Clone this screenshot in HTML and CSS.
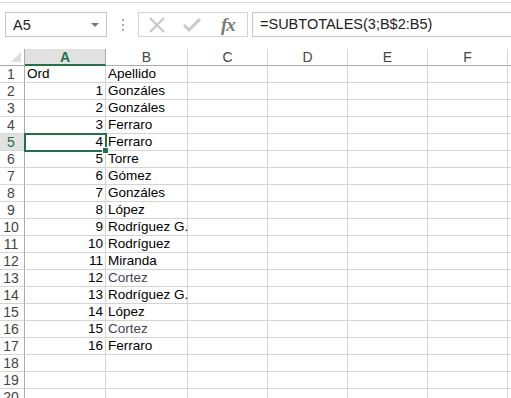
FILE: index.html
```
<!DOCTYPE html>
<html lang="es">
<head>
    <meta charset="UTF-8">
    <title>Libro1</title>
    <link rel="stylesheet" href="styles.css">
</head>
<body>
    <div class="topline"></div>
    <div class="formula-bar">
        <div class="namebox">
            <span>A5</span>
            <span class="drop"></span>
        </div>
        <div class="grip"><i></i><i></i><i></i></div>
        <div class="tools">
            <svg width="18" height="18" viewBox="0 0 18 18"><path d="M2 2 L16 16 M16 2 L2 16" stroke="#c8c8c8" stroke-width="2.2" fill="none"/></svg>
            <svg width="20" height="18" viewBox="0 0 20 18"><path d="M2 9 L7 14 L18 3" stroke="#c8c8c8" stroke-width="3" fill="none"/></svg>
            <span class="fx">fx</span>
        </div>
        <div class="formula">=SUBTOTALES(3;B$2:B5)</div>
    </div>

    <div class="sheet" id="sheet">
        <div class="corner"><span class="tri"></span></div>
        <div class="colhead active">A</div>
        <div class="colhead">B</div>
        <div class="colhead">C</div>
        <div class="colhead">D</div>
        <div class="colhead">E</div>
        <div class="colhead">F</div>
        <div class="colhead"></div>
    </div>

    <script>
        var data = [
            ['Ord', 'Apellido'],
            [1, 'Gonzáles'], [2, 'Gonzáles'], [3, 'Ferraro'], [4, 'Ferraro'],
            [5, 'Torre'], [6, 'Gómez'], [7, 'Gonzáles'], [8, 'López'],
            [9, 'Rodríguez G.'], [10, 'Rodríguez'], [11, 'Miranda'], [12, 'Cortez'],
            [13, 'Rodríguez G.'], [14, 'López'], [15, 'Cortez'], [16, 'Ferraro']
        ];
        var sheet = document.getElementById('sheet');
        var html = '';
        for (var r = 0; r < 20; r++) {
            var row = data[r] || ['', ''];
            var sel = r == 4;
            html += '<div class="rowhead' + (sel ? ' active' : '') + '">' + (r + 1) + '</div>';
            var a = row[0];
            html += '<div class="cell' + (typeof a == 'number' ? ' num' : '') + (sel ? ' selected' : '') + '">' + a +
                (sel ? '<span class="handle"></span>' : '') + '</div>';
            var b = row[1];
            html += '<div class="cell' + (b == 'Cortez' ? ' soft' : '') + '">' + b + '</div>';
            for (var c = 0; c < 5; c++) html += '<div class="cell"></div>';
        }
        sheet.insertAdjacentHTML('beforeend', html);
    </script>
</body>
</html>
```
FILE: styles.css
```
*{
    margin: 0;
    padding: 0;
    box-sizing: border-box;
}
body{
    width: 511px;
    height: 398px;
    overflow: hidden;
    background: #fff;
    font-family: "Liberation Sans", Arial, sans-serif;
    color: #000;
}
.topline{
    height: 3px;
    border-bottom: 1px solid #d6d6d6;
    margin-top: 0;
}
.formula-bar{
    display: flex;
    align-items: center;
    height: 25px;
    margin-top: 9px;
    padding-left: 5px;
}
.namebox{
    width: 102px;
    height: 25px;
    border: 1px solid #c6c6c6;
    display: flex;
    align-items: center;
    justify-content: space-between;
    padding: 0 7px 0 7px;
    font-size: 14.5px;
    color: #222;
}
.namebox .drop{
    width: 0;
    height: 0;
    border-left: 4px solid transparent;
    border-right: 4px solid transparent;
    border-top: 4px solid #777;
}
.grip{
    width: 31px;
    display: flex;
    flex-direction: column;
    align-items: center;
    gap: 3px;
}
.grip i{
    display: block;
    width: 2px;
    height: 2px;
    background: #a8a8a8;
}
.tools{
    width: 110px;
    height: 25px;
    border: 1px solid #d4d4d4;
    display: flex;
    align-items: center;
    padding-left: 9px;
    gap: 16px;
}
.tools .fx{
    font-family: "Liberation Serif", "DejaVu Serif", serif;
    font-style: italic;
    font-weight: bold;
    font-size: 19px;
    color: #7a7a7a;
    margin-left: 3px;
    letter-spacing: -1px;
}
.formula{
    flex: 1;
    height: 25px;
    margin-left: 4px;
    border: 1px solid #c6c6c6;
    border-right: none;
    font-size: 14.5px;
    line-height: 23px;
    padding-left: 7px;
    color: #222;
}
.sheet{
    margin-top: 12px;
    display: grid;
    grid-template-columns: 25px 81px 82px 80px 80px 80px 80px 10px;
    grid-auto-rows: 17px;
    grid-template-rows: 17px;
}
.corner{
    border-right: 1px solid #ababab;
    border-bottom: 1px solid #ababab;
    position: relative;
}
.corner .tri{
    position: absolute;
    right: 3px;
    bottom: 3px;
    width: 0;
    height: 0;
    border-left: 10px solid transparent;
    border-bottom: 10px solid #dcdcdc;
}
.colhead{
    border-right: 1px solid #d6d6d6;
    border-bottom: 1px solid #ababab;
    text-align: center;
    font-size: 14px;
    line-height: 16px;
    color: #444;
}
.colhead.active{
    background: #e1e1e1;
    color: #217346;
    font-weight: bold;
    border-bottom: 2px solid #217346;
    border-right-color: #ababab;
}
.rowhead{
    border-right: 1px solid #ababab;
    border-bottom: 1px solid #d6d6d6;
    text-align: center;
    font-size: 14px;
    line-height: 16px;
    color: #444;
    padding-right: 2px;
}
.rowhead.active{
    background: #e1e1e1;
    color: #217346;
}
.cell{
    border-right: 1px solid #d4d4d4;
    border-bottom: 1px solid #d4d4d4;
    font-size: 13.5px;
    line-height: 16px;
    padding: 0 2px;
    white-space: nowrap;
    position: relative;
}
.cell.num{
    text-align: right;
}
.cell.soft{
    color: #3e4656;
}
.cell.selected{
    outline: 2px solid #217346;
    outline-offset: -1px;
    z-index: 2;
}
.cell .handle{
    position: absolute;
    right: -4px;
    bottom: -4px;
    width: 7px;
    height: 7px;
    background: #217346;
    border: 1px solid #fff;
}
```
